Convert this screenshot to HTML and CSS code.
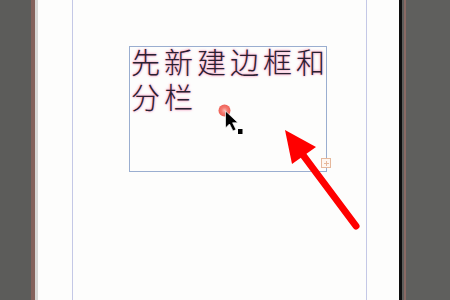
FILE: index.html
```html
<!DOCTYPE html>
<html lang="zh">
<head>
<meta charset="utf-8">
<link rel="stylesheet" href="styles.css">
</head>
<body>
<div class="app">
  <div class="pasteboard-left"></div>
  <div class="edge-brown"></div>
  <div class="edge-light"></div>
  <div class="page">
    <div class="margin-line left"></div>
    <div class="margin-line right"></div>
    <div class="frame">
      <div class="text"><span class="line">先新建边框和</span><span class="line">分栏</span></div>
      <div class="overflow"></div>
    </div>
  </div>
  <div class="edge-black"></div>
  <div class="edge-gray"></div>
  <div class="edge-brown2"></div>
  <div class="pasteboard-right"></div>
</div>
<svg class="overlay" width="450" height="300" viewBox="0 0 450 300">
  <defs>
    <radialGradient id="dot" cx="50%" cy="50%" r="50%">
      <stop offset="0%" stop-color="#fbb8b0"/>
      <stop offset="50%" stop-color="#f47a70"/>
      <stop offset="100%" stop-color="#ef6258"/>
    </radialGradient>
  </defs>
  <circle cx="224.5" cy="110.5" r="6" fill="url(#dot)"/>
  <path d="M225.5 111 L225.5 128 L229.5 124 L233 131 L236 129.6 L232.6 122.8 L238 122.8 Z" fill="#000" stroke="#fff" stroke-width="0.7"/>
  <rect x="238" y="129" width="4.5" height="5" fill="#000"/>
  <line x1="300" y1="151" x2="356" y2="226" stroke="#ff0000" stroke-width="7" stroke-linecap="round"/>
  <polygon points="285,130 292,164 316,147" fill="#ff0000"/>
</svg>
</body>
</html>
```
FILE: styles.css
```css
html, body {
  margin: 0;
  padding: 0;
  width: 450px;
  height: 300px;
  overflow: hidden;
  background: #5d5d5b;
}
.app {
  display: flex;
  width: 450px;
  height: 300px;
}
.pasteboard-left {
  width: 31px;
  background: #5c5c5a;
}
.edge-brown {
  width: 4px;
  background: #84625c;
}
.edge-light {
  width: 3px;
  background: #d8d8d6;
}
.page {
  position: relative;
  width: 361px;
  background: #fdfdfc;
}
.margin-line {
  position: absolute;
  top: 0;
  bottom: 0;
  width: 1px;
  background: #c4c8e6;
}
.margin-line.left { left: 34px; }
.margin-line.right { left: 328px; }
.edge-black {
  width: 3px;
  background: #0e0e0e;
}
.edge-gray {
  width: 2px;
  background: #5e5e5c;
}
.edge-brown2 {
  width: 2px;
  background: #8a6a64;
}
.pasteboard-right {
  flex: 1;
  background: #5f5f5d;
}
.frame {
  position: absolute;
  left: 91px;
  top: 46px;
  width: 196px;
  height: 124px;
  border: 1px solid #9aaed0;
}
.text {
  display: flex;
  flex-direction: column;
  margin-top: -3px;
  padding: 0 0 0 1px;
  font-family: "Noto Sans CJK SC", "Noto Sans", sans-serif;
  font-size: 29px;
  font-weight: 300;
  line-height: 35px;
  letter-spacing: 4px;
  color: #2a2030;
  text-shadow: 0 0 3px #f49cc0, 0 0 2px #f6b8d0, 0 0 1px #f8c8da;
}
.line {
  white-space: nowrap;
}
.overflow {
  position: absolute;
  right: -5px;
  bottom: 3px;
  width: 8px;
  height: 8px;
  border: 1px solid #e6b89c;
  background: #fdf6f0 linear-gradient(#e6b89c, #e6b89c) center / 1px 5px no-repeat;
}
.overflow::after {
  content: "";
  position: absolute;
  left: 1.5px;
  top: 3.5px;
  width: 5px;
  height: 1px;
  background: #e6b89c;
}
.overlay {
  position: absolute;
  left: 0;
  top: 0;
}
```
